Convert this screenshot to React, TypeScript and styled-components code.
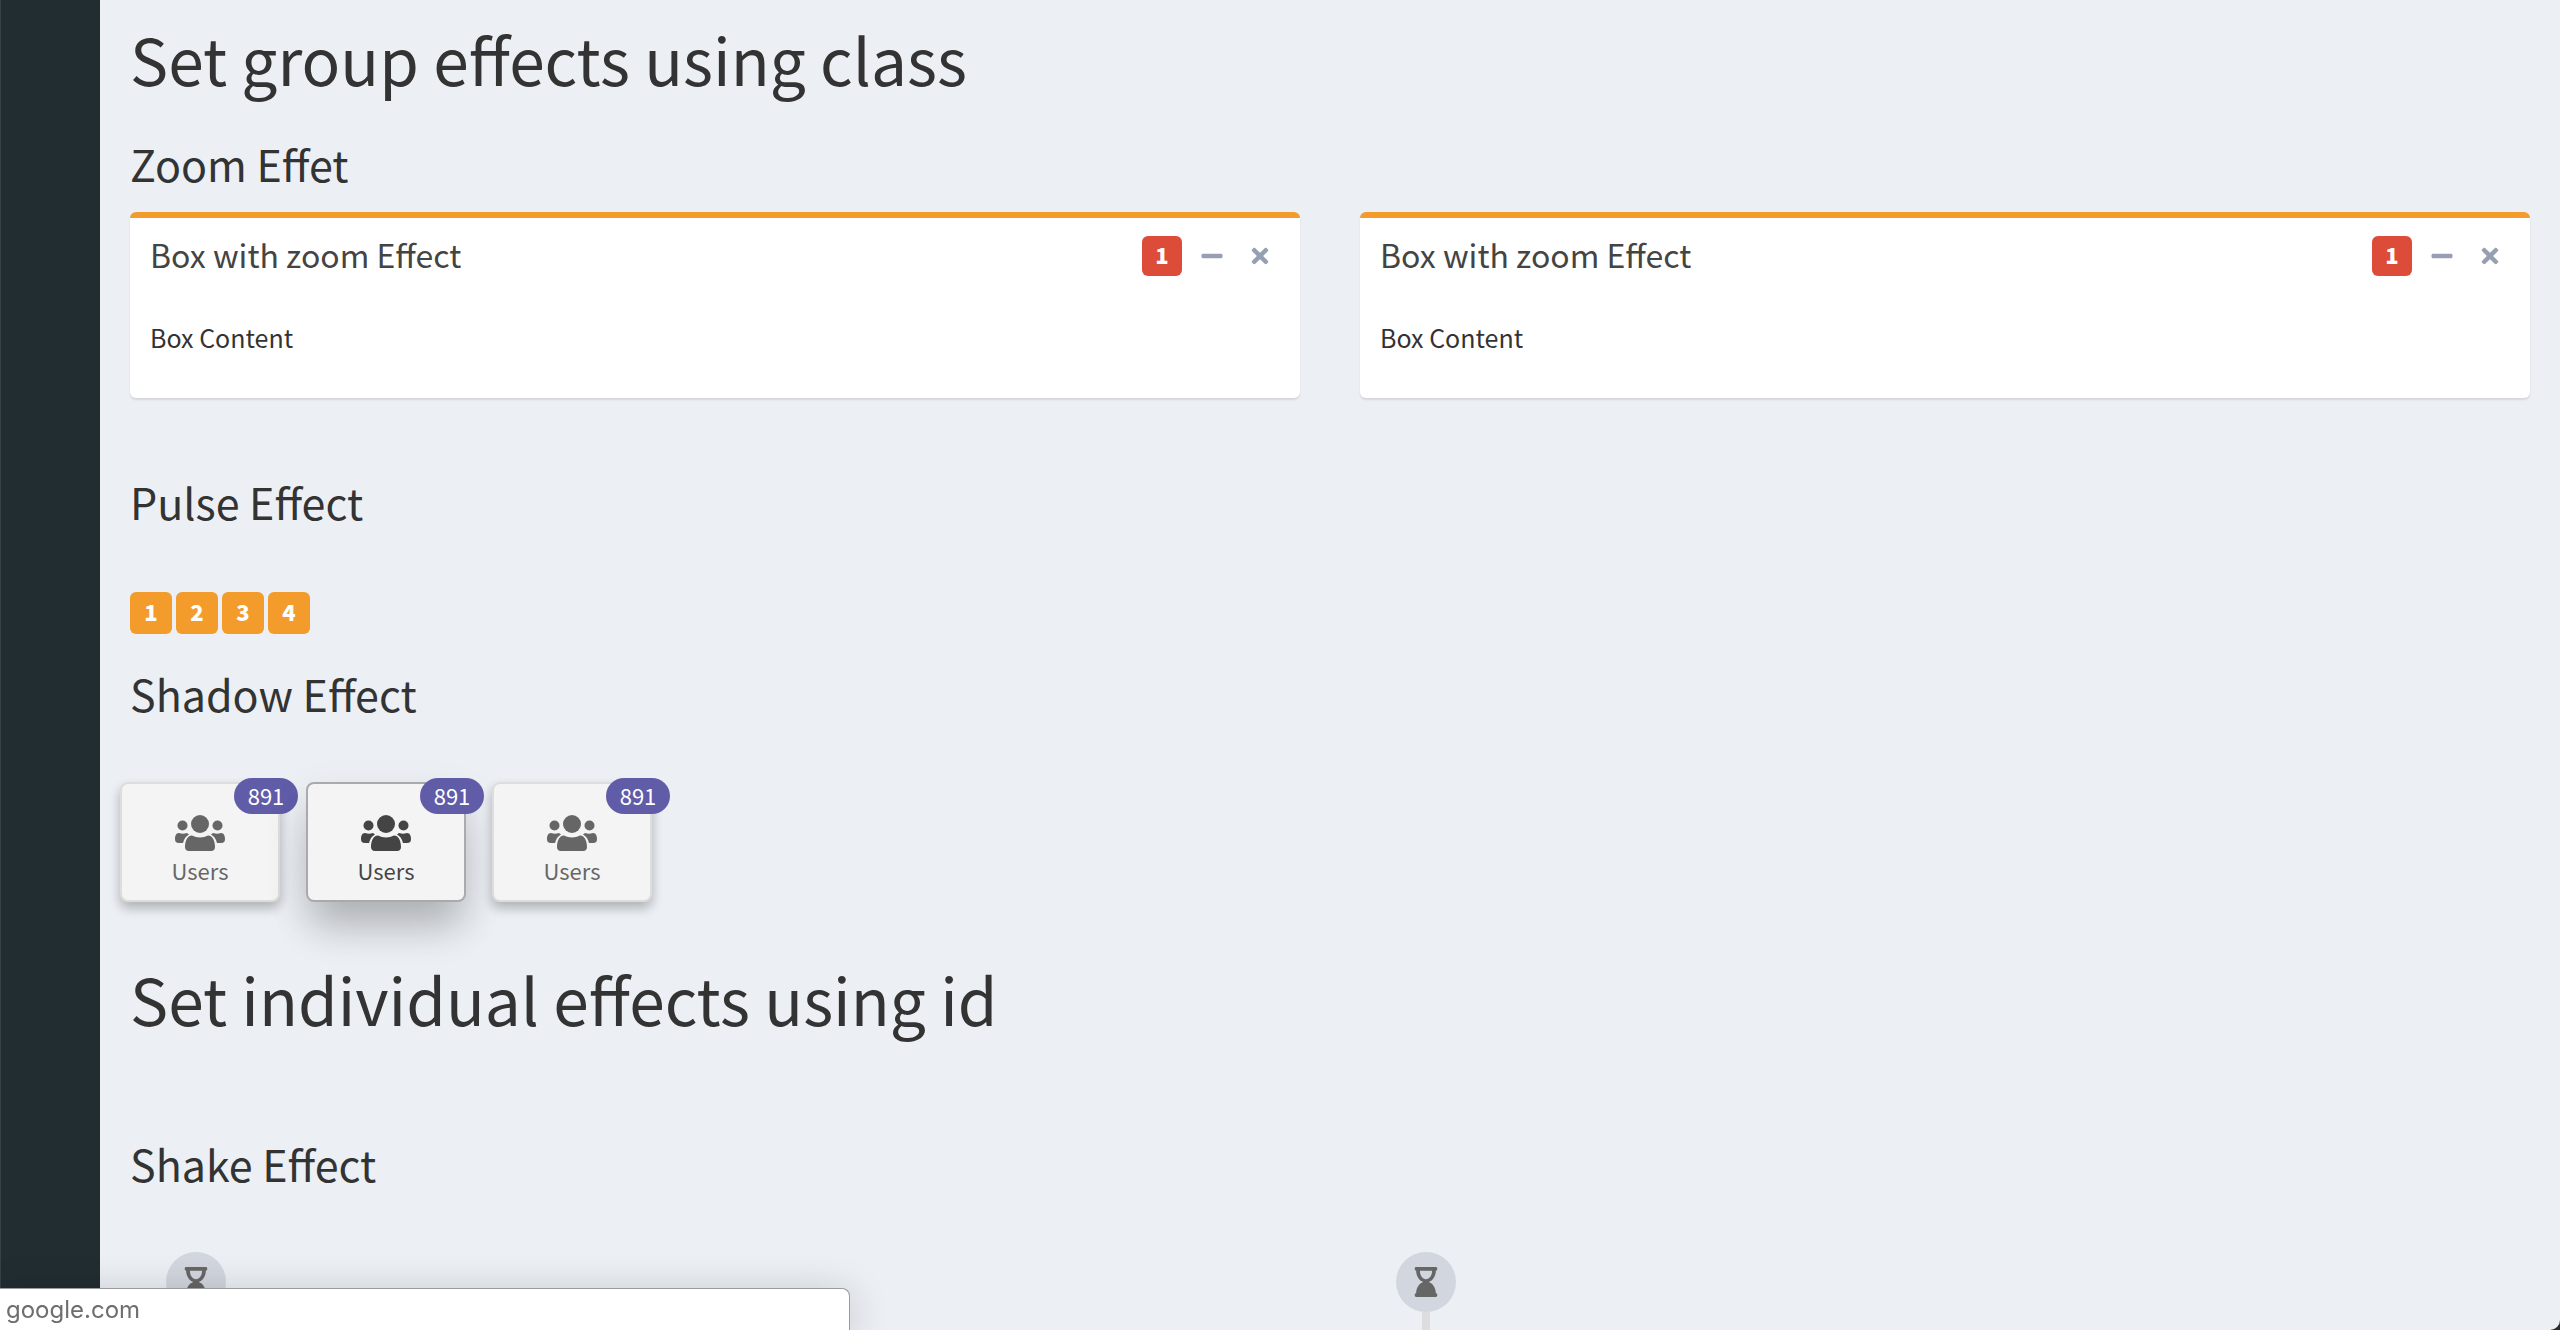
import React from "react";
import styled, { createGlobalStyle } from "styled-components";
import { FaHourglassEnd, FaMinus, FaTimes } from "react-icons/fa";

const GlobalStyle = createGlobalStyle`
  *, *::before, *::after { box-sizing: border-box; }
  html, body { margin: 0; height: 100%; overflow: hidden; }
  body {
    background: #2b2b2b;
    color: #333;
    font-family: "Noto Sans CJK SC", "Noto Sans", sans-serif;
    font-size: 25px;
    line-height: 40px;
  }
`;

const Shell = styled.div`
  display: flex;
  height: 100vh;
  overflow: hidden;
`;

const Sidebar = styled.aside`
  flex: 0 0 100px;
  background: #222d32;
  border-left: 1px solid #364145;
`;

const Content = styled.main`
  flex: 1;
  min-width: 0;
  padding: 12px 30px 0;
  background: #ecf0f5;
  border-bottom-right-radius: 10px;
`;

const PageTitle = styled.h1`
  margin: 0;
  font-size: 64px;
  line-height: 92px;
  font-weight: 400;
`;

const SectionTitle = styled.h2<{ $before: number; $after: number }>`
  margin: ${(p) => p.$before}px 0 ${(p) => p.$after}px;
  font-size: 43px;
  line-height: 52px;
  font-weight: 400;
`;

const Columns = styled.div`
  display: grid;
  grid-template-columns: 1fr 1fr;
  gap: 60px;
`;

const Box = styled.section`
  background: #fff;
  border-top: 6px solid #f39c2c;
  border-radius: 6px;
  box-shadow: 0 2px 2px rgba(0, 0, 0, 0.1);
`;

const BoxHeader = styled.header`
  display: flex;
  align-items: center;
  justify-content: space-between;
  height: 76px;
  padding: 0 16px 0 20px;
`;

const BoxTitle = styled.h3`
  margin: 0;
  padding-bottom: 4px;
  font-size: 32px;
  line-height: 36px;
  font-weight: 400;
  color: #444;
`;

const BoxTools = styled.div`
  display: flex;
  align-items: center;
`;

const BoxBody = styled.div`
  padding: 23px 20px 41px;
`;

const Label = styled.span<{ $tone: string; $size: number }>`
  display: grid;
  place-items: center;
  width: ${(p) => p.$size}px;
  height: ${(p) => p.$size}px;
  padding-bottom: 4px;
  border-radius: 6px;
  background: ${(p) => p.$tone};
  color: #fff;
  font-size: 22px;
  line-height: 22px;
  font-weight: 900;
`;

const ToolButtons = styled.div`
  display: flex;
  margin-left: 6px;
`;

const ToolButton = styled.button`
  display: grid;
  place-items: center;
  width: 48px;
  height: 40px;
  padding: 0;
  border: 0;
  background: none;
  color: #97a0b3;
  font-size: 24px;
`;

const LabelRow = styled.div`
  display: flex;
  gap: 4px;
`;

const AppRow = styled.div`
  display: flex;
  gap: 26px;
  margin: 0 -10px 50px;
`;

const AppButton = styled.button<{ $raised?: boolean }>`
  position: relative;
  display: flex;
  flex-direction: column;
  align-items: center;
  width: 160px;
  height: 120px;
  padding: 31px 0 0;
  border: 2px solid ${(p) => (p.$raised ? "#aaa" : "#ddd")};
  border-radius: 8px;
  background: #f4f4f4;
  color: ${(p) => (p.$raised ? "#444" : "#666")};
  font-family: inherit;
  font-size: 22px;
  line-height: 38px;
  box-shadow: ${(p) =>
    p.$raised
      ? "0 30px 40px -6px rgba(0,0,0,.2), 0 16px 44px rgba(0,0,0,.1)"
      : "0 6px 12px rgba(0,0,0,.16), 0 6px 12px rgba(0,0,0,.12)"};

  svg { display: block; flex: none; }
`;

const Count = styled.span`
  position: absolute;
  top: -6px;
  right: -20px;
  width: 64px;
  height: 36px;
  border-radius: 18px;
  background: #605ca8;
  color: #fff;
  line-height: 34px;
  text-align: center;
`;

const Timeline = styled.div`
  display: flex;
  flex-direction: column;
  align-items: center;
  width: 60px;
  height: 200px;
  margin-left: 36px;

  &::after {
    content: "";
    flex: 1;
    width: 8px;
    background: #ddd;
  }
`;

const TimelineIcon = styled.span`
  display: grid;
  place-items: center;
  width: 60px;
  height: 60px;
  border-radius: 50%;
  background: #d2d6de;
  color: #666;
  font-size: 30px;
`;

const StatusBar = styled.div`
  position: fixed;
  left: 0;
  bottom: 0;
  width: 850px;
  height: 42px;
  padding-left: 6px;
  border: 1px solid #9a9b9e;
  border-width: 1px 1px 0 0;
  border-top-right-radius: 8px;
  background: #fff;
  color: #6e6e6e;
  font-family: Inter, Roboto, sans-serif;
  font-size: 24px;
  line-height: 42px;
  box-shadow: 0 6px 40px rgba(0, 0, 0, 0.2);
`;

const UsersIcon = () => (
  <svg width="50" height="36" viewBox="0 0 50 36" fill="currentColor" aria-hidden="true">
    <circle cx="25" cy="9" r="9" />
    <circle cx="7.5" cy="10.5" r="5" />
    <circle cx="42.5" cy="10.5" r="5" />
    <path d="M17 20.500c5 2.500 11 2.500 16 0c5 0 7 6 7 11.500c0 2-1 4-4 4H14c-3 0-4-2-4-4c0-5.500 2-11.500 7-11.500z" />
    <path d="M4 18c3 1 5 1 8 0l2 1.500c-3 1.500-5 4.500-6 8.500H4c-3 0-4-1.500-4-4c0-3 1-6 4-6z" />
    <path d="M46 18c-3 1-5 1-8 0l-2 1.500c3 1.500 5 4.500 6 8.500h4c3 0 4-1.500 4-4c0-3-1-6-4-6z" />
  </svg>
);

const ZoomBox = () => (
  <Box>
    <BoxHeader>
      <BoxTitle>Box with zoom Effect</BoxTitle>
      <BoxTools>
        <Label $tone="#dd4b39" $size={40}>1</Label>
        <ToolButtons>
          <ToolButton type="button" aria-label="Collapse"><FaMinus /></ToolButton>
          <ToolButton type="button" aria-label="Close"><FaTimes /></ToolButton>
        </ToolButtons>
      </BoxTools>
    </BoxHeader>
    <BoxBody>Box Content</BoxBody>
  </Box>
);

const UsersApp = ({ raised }: { raised?: boolean }) => (
  <AppButton type="button" $raised={raised}>
    <Count>891</Count>
    <UsersIcon />
    Users
  </AppButton>
);

export default function App() {
  return (
    <>
      <GlobalStyle />
      <Shell>
        <Sidebar />
        <Content>
          <PageTitle>Set group effects using class</PageTitle>
          <SectionTitle $before={33} $after={23}>Zoom Effet</SectionTitle>
          <Columns>
            <ZoomBox />
            <ZoomBox />
          </Columns>
          <SectionTitle $before={77} $after={65}>Pulse Effect</SectionTitle>
          <LabelRow>
            {[1, 2, 3, 4].map((n) => (
              <Label key={n} $tone="#f39c2c" $size={42}>{n}</Label>
            ))}
          </LabelRow>
          <SectionTitle $before={33} $after={63}>Shadow Effect</SectionTitle>
          <AppRow>
            <UsersApp />
            <UsersApp raised />
            <UsersApp />
          </AppRow>
          <PageTitle>Set individual effects using id</PageTitle>
          <SectionTitle $before={93} $after={63}>Shake Effect</SectionTitle>
          <Columns>
            <Timeline><TimelineIcon><FaHourglassEnd /></TimelineIcon></Timeline>
            <Timeline><TimelineIcon><FaHourglassEnd /></TimelineIcon></Timeline>
          </Columns>
        </Content>
      </Shell>
      <StatusBar>google.com</StatusBar>
    </>
  );
}
